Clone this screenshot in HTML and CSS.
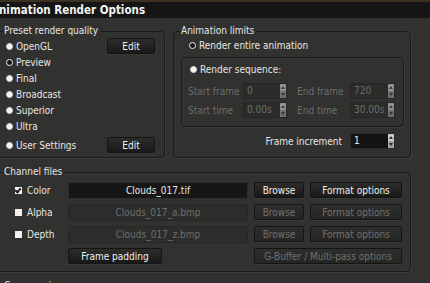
FILE: index.html
```html
<!DOCTYPE html>
<html lang="en">
<head>
    <meta charset="UTF-8">
    <title>Animation Render Options</title>
    <link rel="stylesheet" href="styles.css">
</head>
<body>

    <div class="titlebar">
        <span class="title">Animation Render Options</span>
    </div>

    <div class="dialog">
        <div class="top-row">
            <fieldset class="group preset">
                <legend>Preset render quality</legend>
                <div class="preset-list">
                    <div class="preset-row">
                        <label class="opt"><span class="radio"></span>OpenGL</label>
                        <button class="btn edit">Edit</button>
                    </div>
                    <div class="preset-row"><label class="opt"><span class="radio on"></span>Preview</label></div>
                    <div class="preset-row"><label class="opt"><span class="radio"></span>Final</label></div>
                    <div class="preset-row"><label class="opt"><span class="radio"></span>Broadcast</label></div>
                    <div class="preset-row"><label class="opt"><span class="radio"></span>Superior</label></div>
                    <div class="preset-row"><label class="opt"><span class="radio"></span>Ultra</label></div>
                    <div class="preset-row last">
                        <label class="opt"><span class="radio"></span>User Settings</label>
                        <button class="btn edit">Edit</button>
                    </div>
                </div>
            </fieldset>

            <fieldset class="group limits">
                <legend>Animation limits</legend>
                <label class="opt entire"><span class="radio on"></span>Render entire animation</label>
                <div class="sequence">
                    <label class="opt"><span class="radio"></span>Render sequence:</label>
                    <div class="seq-grid">
                        <span class="dim">Start frame</span>
                        <div class="spin off"><span class="val">0</span><svg class="arrows" viewBox="0 0 6 14"><rect width="6" height="14" fill="#7c7c7a"/><rect x="0.5" y="0.5" width="5" height="6" fill="#9a9a98"/><rect x="0.5" y="7.5" width="5" height="6" fill="#6a6a68"/><path d="M3 2 L5 5 L1 5 Z M3 12 L5 9 L1 9 Z" fill="#3a3a39"/></svg></div>
                        <span class="dim">End frame</span>
                        <div class="spin off"><span class="val">720</span><svg class="arrows" viewBox="0 0 6 14"><rect width="6" height="14" fill="#7c7c7a"/><rect x="0.5" y="0.5" width="5" height="6" fill="#9a9a98"/><rect x="0.5" y="7.5" width="5" height="6" fill="#6a6a68"/><path d="M3 2 L5 5 L1 5 Z M3 12 L5 9 L1 9 Z" fill="#3a3a39"/></svg></div>
                        <span class="dim">Start time</span>
                        <div class="spin off"><span class="val">0.00s</span><svg class="arrows" viewBox="0 0 6 14"><rect width="6" height="14" fill="#7c7c7a"/><rect x="0.5" y="0.5" width="5" height="6" fill="#9a9a98"/><rect x="0.5" y="7.5" width="5" height="6" fill="#6a6a68"/><path d="M3 2 L5 5 L1 5 Z M3 12 L5 9 L1 9 Z" fill="#3a3a39"/></svg></div>
                        <span class="dim">End time</span>
                        <div class="spin off"><span class="val">30.00s</span><svg class="arrows" viewBox="0 0 6 14"><rect width="6" height="14" fill="#7c7c7a"/><rect x="0.5" y="0.5" width="5" height="6" fill="#9a9a98"/><rect x="0.5" y="7.5" width="5" height="6" fill="#6a6a68"/><path d="M3 2 L5 5 L1 5 Z M3 12 L5 9 L1 9 Z" fill="#3a3a39"/></svg></div>
                    </div>
                </div>
                <div class="increment">
                    <span>Frame increment</span>
                    <div class="spin"><span class="val">1</span><svg class="arrows" viewBox="0 0 6 14"><rect width="6" height="14" fill="#b4b4b2"/><rect x="0.5" y="0.5" width="5" height="6" fill="#d6d6d4"/><rect x="0.5" y="7.5" width="5" height="6" fill="#9c9c9a"/><path d="M3 2 L5 5 L1 5 Z M3 12 L5 9 L1 9 Z" fill="#2a2a29"/></svg></div>
                </div>
            </fieldset>
        </div>

        <fieldset class="group channels">
            <legend>Channel files</legend>
            <div class="channel-grid">
                <label class="check-label"><span class="check on"></span>Color</label>
                <div class="file">Clouds_017.tif</div>
                <button class="btn">Browse</button>
                <button class="btn">Format options</button>

                <label class="check-label"><span class="check"></span>Alpha</label>
                <div class="file off">Clouds_017_a.bmp</div>
                <button class="btn off">Browse</button>
                <button class="btn off">Format options</button>

                <label class="check-label"><span class="check"></span>Depth</label>
                <div class="file off">Clouds_017_z.bmp</div>
                <button class="btn off">Browse</button>
                <button class="btn off">Format options</button>

                <span></span>
                <button class="btn padding">Frame padding</button>
                <button class="btn off gbuffer">G-Buffer / Multi-pass options</button>
            </div>
        </fieldset>

        <fieldset class="group next">
            <legend>Compression</legend>
        </fieldset>
    </div>

</body>
</html>
```

FILE: styles.css
```css
body {
    margin: 0;
    background-color: #31312f;
    color: #e6e6e6;
    font-family: "DejaVu Sans Condensed", "DejaVu Sans", sans-serif;
    font-size: 10px;
    overflow: hidden;
    height: 283px;
}
.titlebar {
    height: 15px;
    border-top: 2px solid #3a3122;
    background-color: #151515;
    padding-top: 1px;
    overflow: hidden;
}
.title {
    display: block;
    margin-left: -9px;
    font-size: 11.5px;
    font-weight: bold;
    line-height: 14px;
    color: #f2f2f2;
}
.dialog {
    margin-left: -4px;
    padding-top: 7px;
    height: 266px;
    overflow: hidden;
}
.top-row {
    display: flex;
    gap: 8px;
}
.group {
    margin: 0;
    padding: 0;
    border: 1px solid #1b1b1a;
    border-radius: 4px;
    box-shadow: 1px 1px 0 #3e3e3b;
    min-width: 0;
}
.group legend {
    margin-left: 6px;
    padding: 0 2px 0 1px;
    line-height: 12px;
    color: #e6e6e6;
}
.preset {
    width: 167px;
    height: 131px;
}
.preset-list {
    display: flex;
    flex-direction: column;
    padding-top: 1px;
}
.preset-row {
    display: flex;
    align-items: center;
    justify-content: space-between;
    height: 16px;
    padding-right: 9px;
}
.preset-row.last {
    margin-top: 3px;
}
.opt {
    display: flex;
    align-items: center;
    gap: 3px;
    padding-left: 9px;
    white-space: nowrap;
}
.radio {
    width: 5px;
    height: 5px;
    border-radius: 50%;
    background-color: #f4f4f4;
    border: 1px solid #d8d8d8;
}
.radio.on {
    background-color: #141414;
    border: 1px solid #f0f0f0;
}
.btn {
    font-family: inherit;
    font-size: 10px;
    height: 16px;
    padding: 0;
    color: #f0f0f0;
    background: linear-gradient(#2c2c2b, #191919);
    border: 1px solid #141414;
    border-radius: 2px;
    box-shadow: 0 1px 0 #3b3b39;
}
.btn.off {
    color: #717170;
    background: linear-gradient(#2e2e2d, #252524);
}
.edit {
    width: 48px;
}
.limits {
    width: 236px;
    height: 131px;
}
.entire {
    height: 16px;
    padding-left: 15px;
}
.sequence {
    margin: 4px 6px 0 7px;
    height: 68px;
    border: 1px solid #1b1b1a;
    border-radius: 4px;
    box-shadow: 1px 1px 0 #3e3e3b;
}
.sequence .opt {
    height: 16px;
    padding-left: 8px;
    margin-top: 3px;
}
.seq-grid {
    display: grid;
    grid-template-columns: 55px 54px 53px 45px;
    grid-auto-rows: 16px;
    row-gap: 3px;
    align-items: center;
    padding-left: 6px;
    margin-top: 6px;
}
.seq-grid .spin:nth-child(2),
.seq-grid .spin:nth-child(6) {
    width: 44px;
}
.dim {
    color: #6e6e6c;
}
.spin {
    display: flex;
    height: 16px;
    background-color: #141414;
    border: 1px solid #2a2a29;
    box-sizing: border-box;
}
.spin.off {
    background-color: #2b2b2a;
    border-color: #262625;
    color: #6e6e6c;
}
.spin .val {
    flex: 1;
    padding-left: 3px;
    line-height: 14px;
}
.arrows {
    width: 6px;
    height: 14px;
    display: block;
}
.increment {
    display: flex;
    justify-content: flex-end;
    align-items: center;
    gap: 8px;
    margin: 6px 15px 0 0;
}
.increment .spin {
    width: 45px;
}
.channels {
    width: 413px;
    height: 104px;
    margin-top: 8px;
}
.channel-grid {
    display: grid;
    grid-template-columns: 65px 180px 50px 92px;
    grid-auto-rows: 16px;
    column-gap: 6px;
    row-gap: 6px;
    align-items: center;
    padding-top: 4px;
}
.check-label {
    display: flex;
    align-items: center;
    gap: 5px;
    padding-left: 18px;
}
.check {
    width: 7px;
    height: 7px;
    background-color: #f2f2f2;
    position: relative;
}
.check.on::after {
    content: "";
    position: absolute;
    left: 1px;
    top: 0;
    width: 2px;
    height: 4px;
    border: solid #1a1a1a;
    border-width: 0 2px 2px 0;
    transform: rotate(40deg);
}
.file {
    height: 17px;
    line-height: 15px;
    box-sizing: border-box;
    text-align: center;
    background-color: #161616;
    border: 1px solid #2c2c2b;
}
.file.off {
    background-color: #2c2c2b;
    border-color: #272726;
    color: #6e6e6c;
}
.padding {
    width: 94px;
}
.gbuffer {
    grid-column: 3 / 5;
}
.next {
    width: 413px;
    height: 30px;
    margin-top: 8px;
}
```
